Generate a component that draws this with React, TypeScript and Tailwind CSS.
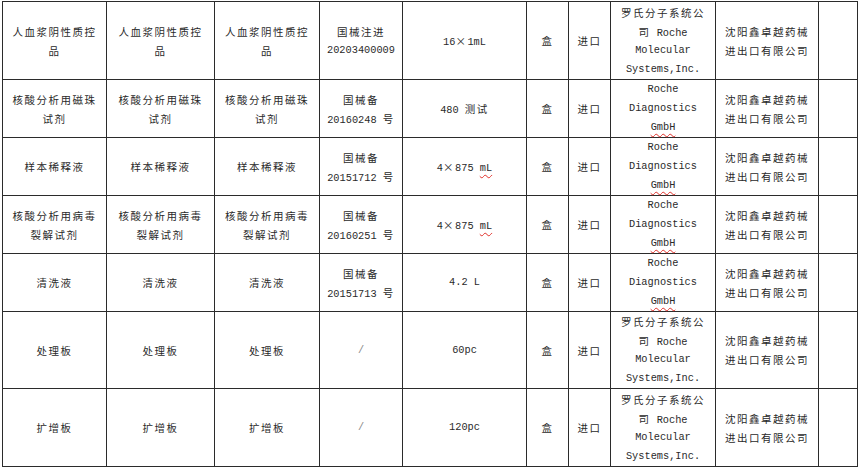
import React from 'react';

// each cell is a list of lines; text between ~ gets the red spell-check squiggle
type Cell = string[];

const CJK = /([\u2E80-\u9FFF\uFF00-\uFFEF\u00D7]+)/;

const maker: Cell = ['罗氏分子系统公', '司 Roche', 'Molecular', 'Systems,Inc.'];
const diag: Cell = ['Roche', 'Diagnostics', '~GmbH~'];
const dealer: Cell = ['沈阳鑫卓越药械', '进出口有限公司'];

const rows: Cell[][] = [
  [['人血浆阴性质控', '品'], ['人血浆阴性质控', '品'], ['人血浆阴性质控', '品'], ['国械注进', '20203400009'], ['16×1mL'], ['盒'], ['进口'], maker, dealer, []],
  [['核酸分析用磁珠', '试剂'], ['核酸分析用磁珠', '试剂'], ['核酸分析用磁珠', '试剂'], ['国械备', '20160248 号'], ['480 测试'], ['盒'], ['进口'], diag, dealer, []],
  [['样本稀释液'], ['样本稀释液'], ['样本稀释液'], ['国械备', '20151712 号'], ['4×875 ~mL~'], ['盒'], ['进口'], diag, dealer, []],
  [['核酸分析用病毒', '裂解试剂'], ['核酸分析用病毒', '裂解试剂'], ['核酸分析用病毒', '裂解试剂'], ['国械备', '20160251 号'], ['4×875 ~mL~'], ['盒'], ['进口'], diag, dealer, []],
  [['清洗液'], ['清洗液'], ['清洗液'], ['国械备', '20151713 号'], ['4.2 L'], ['盒'], ['进口'], diag, dealer, []],
  [['处理板'], ['处理板'], ['处理板'], ['/'], ['60pc'], ['盒'], ['进口'], maker, dealer, []],
  [['扩增板'], ['扩增板'], ['扩增板'], ['/'], ['120pc'], ['盒'], ['进口'], maker, dealer, []],
];

function Runs({ text }: { text: string }) {
  return (
    <>
      {text.split(CJK).filter(Boolean).map((r, j) =>
        CJK.test(r) ? (
          <span key={j} className="font-['Noto_Sans_CJK_SC',sans-serif] text-[10.5px] leading-[19px] tracking-[1.5px]">{r}</span>
        ) : (
          <span key={j} className="font-['Liberation_Mono',monospace] text-[10.3px] leading-[19px]">{r}</span>
        )
      )}
    </>
  );
}

function Line({ text }: { text: string }) {
  const parts = text.split('~');
  return (
    <div className={`h-[19px] whitespace-pre font-['Liberation_Mono',monospace] text-[10.3px] leading-[19px] ${text === '/' ? 'text-[#888]' : ''}`}>
      {parts.map((p, i) =>
        i % 2 ? (
          <span key={i} className="underline decoration-wavy decoration-[#e0302a] decoration-1 underline-offset-[3px]">
            <Runs text={p} />
          </span>
        ) : (
          <Runs key={i} text={p} />
        )
      )}
    </div>
  );
}

export default function App() {
  return (
    <div className="w-[860px] h-[467px] bg-white pt-[1px] pl-[2px] overflow-hidden">
      <div className="grid w-max grid-cols-[103px_107px_104px_82px_123px_41px_41px_104px_102px_38px] grid-rows-[77px_57px_57px_57px_57px_76px_77px] gap-px p-px bg-[#2b2b2b]">
        {rows.map((row, r) =>
          row.map((cell, c) => (
            <div key={`${r}-${c}`} className="bg-white flex flex-col items-center justify-center text-center text-[#2a2a2a]">
              {cell.map((line, k) => (
                <Line key={k} text={line} />
              ))}
            </div>
          ))
        )}
      </div>
    </div>
  );
}
